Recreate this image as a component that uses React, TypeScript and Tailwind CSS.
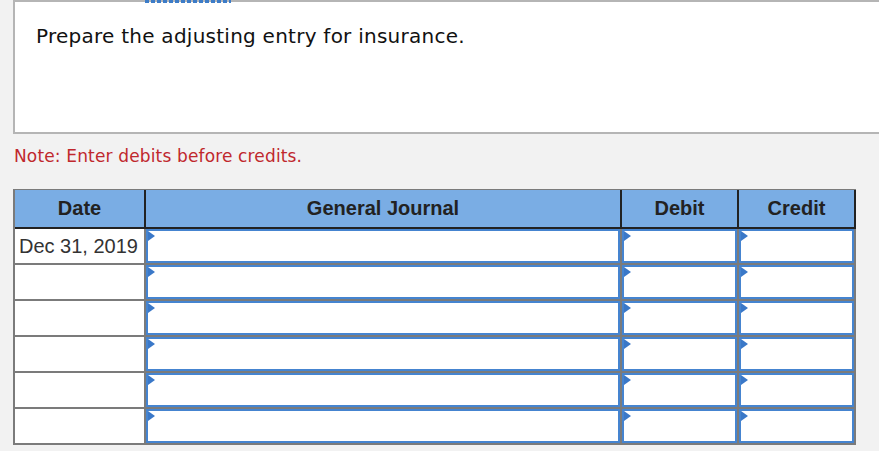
import React from "react";

const bodyRows = ["Dec 31, 2019", "", "", "", "", ""];

function Entry({ width }: { width: string }) {
  return (
    <div className={`${width} h-full bg-white border-r-2 border-[#7b7b7b]`}>
      <div className="relative h-full w-full border-2 border-[#4584d0] bg-white">
        <span className="absolute left-0 top-0 w-0 h-0 border-y-[5px] border-y-transparent border-l-[7px] border-l-[#3a78c8]" />
      </div>
    </div>
  );
}

export default function App() {
  return (
    <div className="relative w-[879px] h-[451px] overflow-hidden bg-[#f2f2f2] font-['DejaVu_Sans',sans-serif]">
      {/* dotted focus marks from the element above */}
      <div className="absolute left-[145px] top-0 z-10 w-[86px] h-[3px] bg-[repeating-linear-gradient(90deg,#3c7cc8_0_4px,transparent_4px_6px)]" />

      {/* Question box */}
      <div className="ml-[13px] w-[900px] h-[134px] border-2 border-[#b5b5b5] bg-white pl-[21px] pt-[22px]">
        <p className="text-[20px] leading-[24px] tracking-[0.25px] text-[#111]">
          Prepare the adjusting entry for insurance.
        </p>
      </div>

      {/* Note */}
      <p className="mt-[12px] ml-[14px] text-[17px] leading-[20px] tracking-[0.15px] text-[#c0282d]">
        Note: Enter debits before credits.
      </p>

      {/* Journal table */}
      <div className="mt-[23px] ml-[13px] w-[843px] font-['Liberation_Sans',Arial,sans-serif]">
        {/* header */}
        <div className="flex h-[40px] border-t border-l-2 border-[#7b7b7b] bg-[#7aade4] text-[20px] font-bold text-[#222]">
          <div className="w-[131px] flex items-center justify-center pb-[1px] border-r-2 border-b-2 border-[#222]">Date</div>
          <div className="w-[476px] flex items-center justify-center pb-[1px] border-r-2 border-b-2 border-[#222]">General Journal</div>
          <div className="w-[117px] flex items-center justify-center pb-[1px] border-r-2 border-b-2 border-[#222]">Debit</div>
          <div className="w-[117px] flex items-center justify-center pb-[1px] border-r-2 border-b-2 border-[#222]">Credit</div>
        </div>

        {/* body */}
        {bodyRows.map((date, i) => (
          <div key={i} className="flex h-[36px] border-l-2 border-b-2 border-[#7b7b7b]">
            <div className="w-[131px] h-full flex items-center pl-[4px] bg-white border-r-2 border-[#7b7b7b] text-[20px] text-[#333]">
              {date}
            </div>
            <Entry width="w-[476px]" />
            <Entry width="w-[117px]" />
            <Entry width="w-[117px]" />
          </div>
        ))}
      </div>
    </div>
  );
}
